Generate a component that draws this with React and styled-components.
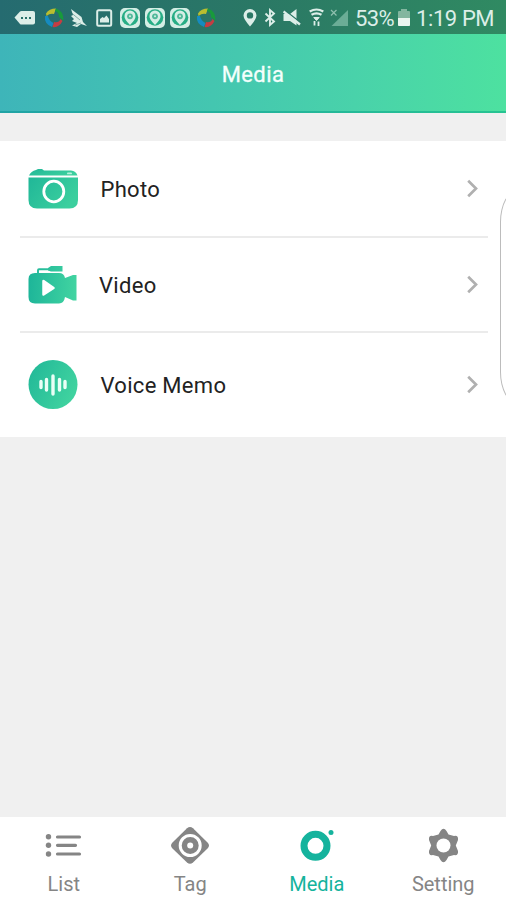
import React from "react";
import styled, { createGlobalStyle } from "styled-components";

const GlobalStyle = createGlobalStyle`
  * {
    box-sizing: border-box;
  }

  body {
    margin: 0;
    background: #f0f0f0;
    font-family: Roboto, "Liberation Sans", sans-serif;
  }

  svg {
    display: block;
    flex-shrink: 0;
  }
`;

const Screen = styled.div`
  position: relative;
  display: flex;
  flex-direction: column;
  width: 506px;
  height: 900px;
  overflow: hidden;
  background: #f0f0f0;
`;

const StatusBar = styled.div`
  display: flex;
  align-items: center;
  height: 34px;
  padding: 2px 10px 0 14px;
  background: linear-gradient(90deg, #256b70 0%, #2a7865 50%, #308a62 100%);
  color: #dceee8;
`;

const StatusIcons = styled.div`
  display: flex;
  align-items: center;
  width: 229px;
  flex-shrink: 0;
`;

const StatusIcon = styled.svg`
  width: ${({ $width }) => $width}px;
  height: 22px;
  margin-right: ${({ $gap }) => $gap || 0}px;
`;

const StatusText = styled.span`
  flex-shrink: 0;
  width: ${({ $width }) => $width}px;
  padding-top: 2px;
  font-size: 22px;
  line-height: 28px;
  letter-spacing: ${({ $spacing }) => $spacing || 0}px;
  white-space: nowrap;
`;

const Header = styled.header`
  display: flex;
  align-items: center;
  justify-content: center;
  height: 79px;
  padding-top: 5px;
  border-bottom: 2px solid;
  border-image: linear-gradient(90deg, #20a3a5, #27c492) 1;
  background: linear-gradient(
    90deg,
    #3eb5b9 0%,
    #44c6b0 42%,
    #49d2aa 70%,
    #4de1a0 100%
  );
`;

const Title = styled.h1`
  margin: 0;
  color: #f4fffc;
  font-size: 22px;
  font-weight: 400;
  line-height: 28px;
  letter-spacing: 0.4px;
  -webkit-text-stroke: 0.3px #f4fffc;
`;

const MenuList = styled.div`
  margin-top: 28px;
  padding: 0 18px 0 20px;
  background: #fff;
`;

const MenuItem = styled.div`
  display: flex;
  align-items: center;
  height: ${({ $height }) => $height}px;
  padding: 0 9px 0 8px;

  & + & {
    border-top: 2px solid #ebebeb;
  }
`;

const MenuLabel = styled.span`
  flex: 1;
  margin-left: ${({ $offset }) => $offset || 22.5}px;
  padding-top: 2px;
  color: #222;
  font-size: 22px;
  line-height: 28px;
  letter-spacing: 0.3px;
`;

const EdgePanel = styled.div`
  position: absolute;
  top: 190px;
  left: 500px;
  width: 40px;
  height: 214px;
  border: 1px solid #bcbcbc;
  border-radius: 18px / 32px;
  background: #fff;
`;

const TabBar = styled.nav`
  display: flex;
  height: 83px;
  margin-top: auto;
  background: #fff;
`;

const Tab = styled.div`
  display: flex;
  flex: 1;
  flex-direction: column;
  align-items: center;
  padding-top: 8px;
  color: ${({ $active }) => ($active ? "#15b39d" : "#858585")};
`;

const TabLabel = styled.span`
  margin-top: 4px;
  padding-left: 1px;
  font-size: 20px;
  line-height: 26px;
`;

function BallIcon({ gap }) {
  return (
    <StatusIcon $width={20} $gap={gap} viewBox="0 0 20 22" fill="none">
      <path d="M2 6.500Q5 1.500 12 1.500L10 7Q6 6 2.500 9Z" fill="#b9bd30" />
      <path d="M12 1.500Q20 4 19.500 14L15 10Q15 5 11 4Z" fill="#189a3b" />
      <path d="M18.500 14Q15 21 8.500 20L10 15Q15 16 16.500 12Z" fill="#c53d42" />
      <path d="M1 9Q0 17 8 20L9.500 16Q5 14 4 9Z" fill="#168bc0" />
    </StatusIcon>
  );
}

function TrackerIcon({ gap }) {
  return (
    <StatusIcon $width={20} $gap={gap} viewBox="0 0 20 22">
      <rect y="1" width="20" height="20" rx="5" fill="#d4eee5" />
      <circle cx="10" cy="10.500" r="8.300" fill="#27ad85" />
      <path
        d="M10 18Q4 12 4.500 9A5.500 5.500 0 0 1 15.500 9Q16 12 10 18Z"
        fill="#d4eee5"
      />
      <circle cx="10" cy="9.300" r="2.900" fill="#51b99a" />
      <circle cx="10" cy="9.300" r="1" fill="#d4eee5" />
    </StatusIcon>
  );
}

function Notifications() {
  return (
    <StatusIcons>
      <StatusIcon $width={21} $gap={9} viewBox="0 0 21 22">
        <path
          d="M0.500 10.500L6 4.500Q6.500 4 7.500 4H19Q21 4 21 6V15.500Q21 17.500 19 17.500H7.500Q6.500 17.500 6 17Z"
          fill="currentColor"
        />
        <path
          d="M7 10h2v2H7ZM11 10h2v2h-2ZM15 10h2v2h-2Z"
          fill="#287069"
        />
      </StatusIcon>
      <BallIcon gap={6} />
      <StatusIcon
        $width={18}
        $gap={8}
        viewBox="0 0 18 22"
        fill="currentColor"
      >
        <path d="M1 2L11.500 10L13 15L17 19L11 17L7 20L2 18.500L7 16L2 14L4 12L1 9L3 8Z" />
        <path
          d="M1.500 6L10 13M5 18L11 16"
          fill="none"
          stroke="#287069"
          strokeWidth="0.500"
        />
      </StatusIcon>
      <StatusIcon $width={17} $gap={7} viewBox="0 0 17 22">
        <rect
          x="1.200"
          y="3.200"
          width="14"
          height="15.500"
          rx="1.500"
          fill="none"
          stroke="currentColor"
          strokeWidth="2"
        />
        <path d="M4 15.500V12L6.500 10L8 11L10.500 8.500L13 12V15.500Z" fill="currentColor" />
      </StatusIcon>
      <TrackerIcon gap={5} />
      <TrackerIcon gap={5} />
      <TrackerIcon gap={6} />
      <BallIcon />
    </StatusIcons>
  );
}

function SystemStatus() {
  return (
    <>
      <StatusIcon $width={14} $gap={7} viewBox="0 0 14 22">
        <path
          d="M7 19.500Q0.500 12 0.500 8.500A6.500 6.500 0 0 1 13.500 8.500Q13.500 12 7 19.500ZM7 5.200A3.200 3.200 0 1 0 7 11.600A3.200 3.200 0 1 0 7 5.200Z"
          fill="currentColor"
          fillRule="evenodd"
        />
      </StatusIcon>
      <StatusIcon $width={12} $gap={7} viewBox="0 0 12 22">
        <path
          d="M1.500 6.500L10 14.500L6 18V3L10 6.500L1.500 14.500"
          fill="none"
          stroke="currentColor"
          strokeWidth="1.900"
        />
      </StatusIcon>
      <StatusIcon $width={18} $gap={8} viewBox="0 0 18 22">
        <path d="M0.500 7H7L13.500 2V18.500L7 14H0.500Z" fill="currentColor" />
        <path d="M2 3.500L18 16" stroke="#2a7665" strokeWidth="1.400" />
        <path d="M0.500 4.500L17 17.500" stroke="currentColor" strokeWidth="2.300" />
      </StatusIcon>
      <StatusIcon
        $width={15}
        $gap={6}
        viewBox="0 0 15 22"
        fill="none"
        stroke="currentColor"
      >
        <path d="M0.700 4.500Q7.500 0.500 14.300 4.500" strokeWidth="2.200" />
        <path d="M2.500 7.800Q7.500 5 12.500 7.800" strokeWidth="2.200" />
        <path d="M4.800 10.500H10.200L7.500 13.500Z" fill="currentColor" />
        <path d="M5.500 14V18.500M9.500 19V14.500" strokeWidth="1.800" />
      </StatusIcon>
      <StatusIcon $width={18} $gap={7} viewBox="0 0 18 22">
        <path d="M18 3V19H1.500Z" fill="#6bad96" />
        <path d="M1 3L6.500 8.500M6.500 3L1 8.500" stroke="#8fc0ae" strokeWidth="1.200" />
      </StatusIcon>
      <StatusText $width={43} $spacing={-0.6}>
        53%
      </StatusText>
      <StatusIcon $width={12} $gap={6} viewBox="0 0 12 22">
        <path
          d="M3 2H9V4H11Q12 4 12 5V18.500H0V5Q0 4 1 4H3Z"
          fill="#83b69f"
        />
        <path d="M0 11H12V18Q12 19 11 19H1Q0 19 0 18Z" fill="#eaf5ef" />
      </StatusIcon>
      <StatusText $width={80} $spacing={-0.4}>
        1:19 PM
      </StatusText>
    </>
  );
}

function PhotoIcon() {
  return (
    <svg width="50" height="50" viewBox="0 0 50 50">
      <defs>
        <linearGradient id="photo" x1="0" y1="0" x2="1" y2="0.500">
          <stop offset="0" stopColor="#20b798" />
          <stop offset="1" stopColor="#3bcf9e" />
        </linearGradient>
      </defs>
      <path
        d="M1 11.500Q3 7 8 6L10 5H14L16 6.500H43Q48 7 49.500 11.500Z"
        fill="url(#photo)"
      />
      <path
        d="M0.500 13.500H50V36Q50 44.500 41.500 44.500H9Q0.500 44.500 0.500 36Z"
        fill="url(#photo)"
      />
      <ellipse
        cx="25.800"
        cy="27.500"
        rx="10"
        ry="10.300"
        fill="none"
        stroke="#fff"
        strokeWidth="2.800"
      />
      <rect x="39" y="8.500" width="5" height="1.800" rx="0.900" fill="#b6f3dd" />
    </svg>
  );
}

function VideoIcon() {
  return (
    <svg width="50" height="50" viewBox="0 0 50 50">
      <defs>
        <linearGradient
          id="video"
          gradientUnits="userSpaceOnUse"
          x1="0"
          y1="25"
          x2="50"
          y2="28"
        >
          <stop offset="0" stopColor="#1db599" />
          <stop offset="1" stopColor="#43d5a1" />
        </linearGradient>
      </defs>
      <path
        d="M10 14V10.300Q10 9.300 11 9.300H23"
        fill="none"
        stroke="url(#video)"
        strokeWidth="1.900"
      />
      <path d="M20 8L23 6H34.500V11.500H23L20 10.500Z" fill="url(#video)" />
      <path
        d="M7 13H31Q36 13 37 18L45 15H48.500V40.500H45L37 37Q36 43.500 31 43.500H7Q0.500 43.500 0.500 37V19Q0.500 13 7 13Z"
        fill="url(#video)"
      />
      <path
        d="M15.500 21L25.500 28L15.500 34.500Z"
        fill="#fff"
        stroke="#fff"
        strokeWidth="2.500"
        strokeLinejoin="round"
      />
    </svg>
  );
}

function VoiceIcon() {
  return (
    <svg width="50" height="50" viewBox="0 0 50 50">
      <defs>
        <linearGradient id="voice" x1="0" y1="0" x2="1" y2="0.500">
          <stop offset="0" stopColor="#20b798" />
          <stop offset="1" stopColor="#3fd29f" />
        </linearGradient>
      </defs>
      <circle cx="25" cy="24.500" r="24.500" fill="url(#voice)" />
      <path
        d="M13 21.500V27.500M18.500 19.500V30M25 16V34M31.500 19.500V30M37 21.500V27.500"
        stroke="#e9fff6"
        strokeWidth="3.400"
        strokeLinecap="round"
      />
    </svg>
  );
}

function Chevron() {
  return (
    <svg width="12" height="20" viewBox="0 0 12 20">
      <path
        d="M1.200 1.800L9 9.500L1.200 17.200"
        fill="none"
        stroke="#b0b0b0"
        strokeWidth="2.700"
      />
    </svg>
  );
}

function ListIcon() {
  return (
    <svg width="42" height="42" viewBox="0 0 42 42" fill="currentColor">
      <circle cx="6.500" cy="11.700" r="2.700" />
      <circle cx="6.500" cy="20.300" r="2.700" />
      <circle cx="6.500" cy="29" r="2.700" />
      <path
        d="M15.500 12H37.500M15.500 20.300H33.500M15.500 29H37.500"
        stroke="currentColor"
        strokeWidth="3.200"
        strokeLinecap="round"
      />
    </svg>
  );
}

function TagIcon() {
  return (
    <svg width="42" height="42" viewBox="0 0 42 42">
      <path
        d="M18 3.200Q21 0.800 24 3.200L38.500 17.500Q41.500 20.500 38.500 23.500L24 37.500Q21 40 18 37.500L3.500 23.500Q0.500 20.500 3.500 17.500Z"
        fill="currentColor"
      />
      <circle
        cx="21.200"
        cy="20.500"
        r="10"
        fill="none"
        stroke="#fff"
        strokeWidth="3"
      />
      <circle cx="21.200" cy="20.500" r="3" fill="#fff" />
    </svg>
  );
}

function MediaIcon() {
  return (
    <svg width="42" height="42" viewBox="0 0 42 42">
      <circle
        cx="20.500"
        cy="20.800"
        r="11.500"
        fill="none"
        stroke="currentColor"
        strokeWidth="7"
      />
      <circle cx="36" cy="7.500" r="2.500" fill="currentColor" />
    </svg>
  );
}

function SettingIcon() {
  return (
    <svg width="42" height="42" viewBox="0 0 42 42" fill="currentColor">
      <path d="M18.500 6Q21.500 1.500 24.500 6L26.500 9.500L32 11Q36.500 10 36 15L33.800 20.500L36 26Q36.500 31 32 30L26.500 31.500L24.500 35Q21.500 39.500 18.500 35L16.500 31.500L11 30Q6.500 31 7 26L9.200 20.500L7 15Q6.500 10 11 11L16.500 9.500Z" />
      <circle cx="21.500" cy="20.500" r="7" fill="#fff" />
    </svg>
  );
}

const menuItems = [
  { label: "Photo", Icon: PhotoIcon, height: 95 },
  { label: "Video", Icon: VideoIcon, height: 95, offset: 21 },
  { label: "Voice Memo", Icon: VoiceIcon, height: 106 },
];

const tabs = [
  { label: "List", Icon: ListIcon },
  { label: "Tag", Icon: TagIcon },
  { label: "Media", Icon: MediaIcon, active: true },
  { label: "Setting", Icon: SettingIcon },
];

export default function App() {
  return (
    <Screen>
      <GlobalStyle />
      <StatusBar>
        <Notifications />
        <SystemStatus />
      </StatusBar>
      <Header>
        <Title>Media</Title>
      </Header>
      <MenuList>
        {menuItems.map(({ label, Icon, height, offset }) => (
          <MenuItem key={label} $height={height}>
            <Icon />
            <MenuLabel $offset={offset}>{label}</MenuLabel>
            <Chevron />
          </MenuItem>
        ))}
      </MenuList>
      <EdgePanel />
      <TabBar>
        {tabs.map(({ label, Icon, active }) => (
          <Tab key={label} $active={active}>
            <Icon />
            <TabLabel>{label}</TabLabel>
          </Tab>
        ))}
      </TabBar>
    </Screen>
  );
}
